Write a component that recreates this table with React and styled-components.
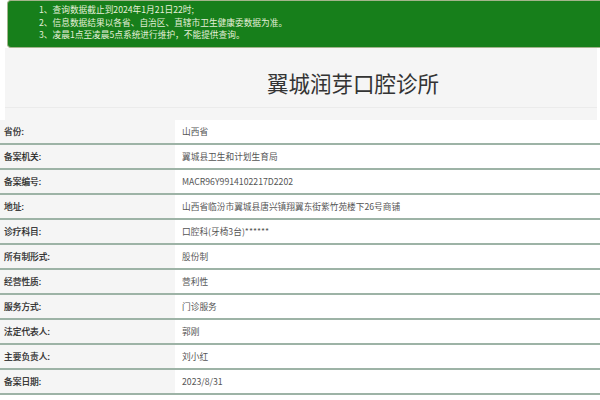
import React from 'react';
import styled, { createGlobalStyle } from 'styled-components';

const GlobalStyle = createGlobalStyle`
  body {
    margin: 0;
    background: #ffffff;
    font-family: "Noto Sans CJK SC", "Noto Sans", sans-serif;
  }
`;

const notices = [
  '1、查询数据截止到2024年1月21日22时;',
  '2、信息数据结果以各省、自治区、直辖市卫生健康委数据为准。',
  '3、凌晨1点至凌晨5点系统进行维护，不能提供查询。',
];

const rows = [
  ['省份:', '山西省'],
  ['备案机关:', '翼城县卫生和计划生育局'],
  ['备案编号:', 'MACR96Y9914102217D2202'],
  ['地址:', '山西省临汾市翼城县唐兴镇翔翼东街紫竹苑楼下26号商铺'],
  ['诊疗科目:', '口腔科(牙椅3台)******'],
  ['所有制形式:', '股份制'],
  ['经营性质:', '营利性'],
  ['服务方式:', '门诊服务'],
  ['法定代表人:', '郭刚'],
  ['主要负责人:', '刘小红'],
  ['备案日期:', '2023/8/31'],
];

const App = () => {
  return (
    <>
      <GlobalStyle />
      <Notice>
        {notices.map((n) => (
          <NoticeLine key={n}>{n}</NoticeLine>
        ))}
      </Notice>
      <TitlePanel>
        <TitleBar>
          <Title>翼城润芽口腔诊所</Title>
        </TitleBar>
      </TitlePanel>
      <Table>
        {rows.map(([label, value]) => (
          <Row key={label}>
            <Label>{label}</Label>
            <Value>{value}</Value>
          </Row>
        ))}
      </Table>
    </>
  );
};

const Notice = styled.div`
  margin-left: 7px;
  height: 43px;
  padding: 3px 0 0 31px;
  background: #177f1b;
  border: 1px solid #a3b48c;
  border-right: none;
  border-radius: 4px 0 0 4px;
  display: flex;
  flex-direction: column;
`;

const NoticeLine = styled.div`
  color: #e4efd8;
  font-size: 8.7px;
  line-height: 12.5px;
  white-space: nowrap;
`;

const TitlePanel = styled.div`
  margin: 0 3px 0 5px;
  height: 72px;
  background: #f5f5f5;
`;

const TitleBar = styled.div`
  height: 60px;
  border-bottom: 1px solid #ebebeb;
  display: flex;
  align-items: center;
  justify-content: center;
  padding-left: 104px;
  box-sizing: border-box;
`;

const Title = styled.h1`
  margin: 10px 0 0;
  font-size: 21.5px;
  font-weight: 400;
  color: #333333;
`;

const Table = styled.div`
  display: flex;
  flex-direction: column;
`;

const Row = styled.div`
  display: grid;
  grid-template-columns: 175px 1fr;
  height: 25px;
  box-sizing: border-box;
  border-bottom: 2px solid #9db3a6;
`;

const Label = styled.div`
  background: #f5f5f5;
  display: flex;
  align-items: center;
  padding-left: 4px;
  font-size: 8.7px;
  font-weight: 400;
  color: #222222;
  -webkit-text-stroke: 0.2px #222222;
`;

const Value = styled.div`
  display: flex;
  align-items: center;
  padding-left: 7px;
  font-size: 8.7px;
  color: #555555;
  white-space: nowrap;
`;

export default App;
